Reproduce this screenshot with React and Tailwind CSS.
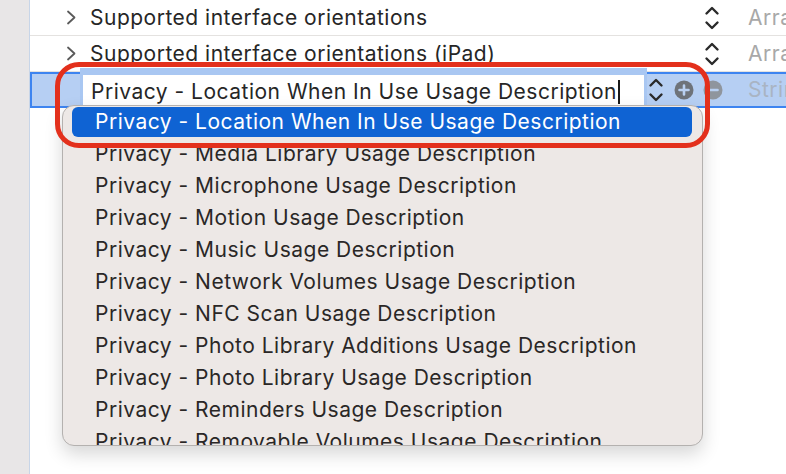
import React from 'react';

const ITEMS = [
  'Privacy - Location When In Use Usage Description',
  'Privacy - Media Library Usage Description',
  'Privacy - Microphone Usage Description',
  'Privacy - Motion Usage Description',
  'Privacy - Music Usage Description',
  'Privacy - Network Volumes Usage Description',
  'Privacy - NFC Scan Usage Description',
  'Privacy - Photo Library Additions Usage Description',
  'Privacy - Photo Library Usage Description',
  'Privacy - Reminders Usage Description',
  'Privacy - Removable Volumes Usage Description',
];

function Disclosure() {
  return (
    <svg width="11" height="15" viewBox="0 0 11 15" className="shrink-0">
      <path d="M2 1.5 L8.5 7.5 L2 13.5" fill="none" stroke="#5a5a5a" strokeWidth="1.8" strokeLinecap="round" strokeLinejoin="round" />
    </svg>
  );
}

function Stepper() {
  return (
    <svg width="16" height="26" viewBox="0 0 16 26" className="shrink-0">
      <path d="M2.5 8.5 L8 3 L13.5 8.5 M2.5 17.5 L8 23 L13.5 17.5" fill="none" stroke="#2a2a2a" strokeWidth="2.4" strokeLinecap="round" strokeLinejoin="round" />
    </svg>
  );
}

function CircleSign({ plus, color }) {
  return (
    <svg width="20" height="20" viewBox="0 0 20 20" className="shrink-0">
      <circle cx="10" cy="10" r="9.5" fill={color} />
      <path d={plus ? 'M10 5.5 V14.5 M5.5 10 H14.5' : 'M5.5 10 H14.5'} stroke="#b9d0f1" strokeWidth="2.6" strokeLinecap="round" />
    </svg>
  );
}

function Row({ name, type }) {
  return (
    <div className="h-[36px] flex items-center border-b border-[#e4e2e0] shrink-0">
      <div className="w-[36px] shrink-0" />
      <Disclosure />
      <div className="w-[627px] shrink-0 pl-[13px] text-[21px] tracking-[0.5px] text-[#262626] whitespace-nowrap overflow-hidden">{name}</div>
      <Stepper />
      <div className="pl-[28px] text-[21px] tracking-[0.5px] text-[#a8a8a8] whitespace-nowrap">{type}</div>
    </div>
  );
}

export default function App() {
  return (
    <div className="relative w-[786px] h-[474px] overflow-hidden bg-white flex font-['Inter',sans-serif]">
      {/* sidebar strip */}
      <div className="w-[30px] shrink-0 bg-[#e8e6e7] border-r border-[#c7d5e8]" />

      <div className="flex-1 flex flex-col min-w-0">
        <Row name="Supported interface orientations" type="Array" />
        <Row name="Supported interface orientations (iPad)" type="Array" />

        {/* selected row, key being edited */}
        <div className="h-[36px] flex items-start shrink-0 bg-[#b6cff3] border-t-2 border-b-2 border-[#3d84f0]">
          <div className="w-[50px] shrink-0 h-full border-l-2 border-[#3d84f0]" />
          <div className="-mt-[6px] w-[567px] shrink-0 h-[40px] bg-[#a9c7f2] pt-[7px] px-[3px]">
            <div className="h-full bg-white flex items-center pl-[8px] text-[21px] tracking-[0.5px] text-[#262626] whitespace-nowrap overflow-hidden">
              Privacy - Location When In Use Usage Description
              <span className="inline-block w-[2px] h-[24px] bg-[#1a1a1a] ml-[1px] shrink-0" />
            </div>
          </div>
          <div className="h-full flex items-center pl-[1px]">
            <Stepper />
            <div className="w-[10px] shrink-0" />
            <CircleSign plus color="#6e737a" />
            <div className="w-[9px] shrink-0" />
            <CircleSign color="#8f959d" />
            <div className="pl-[25px] text-[21px] tracking-[0.5px] text-[#a9b4c3] whitespace-nowrap">String</div>
          </div>
        </div>

        <div className="flex-1" />
      </div>

      {/* completion popup */}
      <div className="absolute left-[62px] top-[105px] w-[641px] h-[341px] bg-[#ede8e6] border border-[#b4b1af] rounded-[12px] shadow-[0_8px_18px_rgba(0,0,0,0.16)] overflow-hidden pl-[9px] pr-[10px]">
        {ITEMS.map((item, i) => (
          <div key={item} className="h-[32px] flex items-center">
            <div className={i === 0
              ? 'w-full h-[30px] flex items-center pl-[23px] rounded-[6px] bg-[#0f63d3] text-white text-[21px] tracking-[0.5px] whitespace-nowrap'
              : 'w-full h-[30px] flex items-center pl-[23px] text-[#2a2726] text-[21px] tracking-[0.5px] whitespace-nowrap'}>
              {item}
            </div>
          </div>
        ))}
      </div>

      {/* red annotation ring */}
      <div className="absolute left-[55px] top-[62px] w-[655px] h-[86px] border-[5px] border-[#e3301c] rounded-[24px] pointer-events-none" />
    </div>
  );
}
